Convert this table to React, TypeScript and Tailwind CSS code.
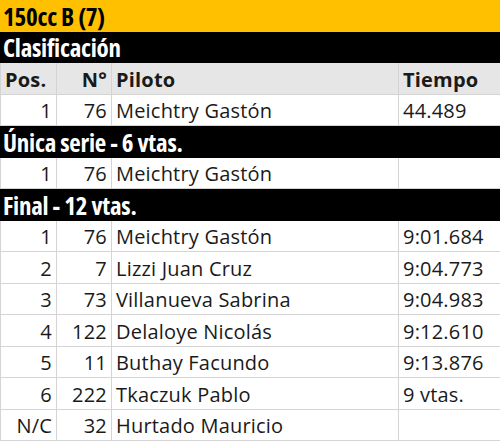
const rows: { pos: string; num: string; name: string; time: string }[] = [
  { pos: "1", num: "76", name: "Meichtry Gastón", time: "9:01.684" },
  { pos: "2", num: "7", name: "Lizzi Juan Cruz", time: "9:04.773" },
  { pos: "3", num: "73", name: "Villanueva Sabrina", time: "9:04.983" },
  { pos: "4", num: "122", name: "Delaloye Nicolás", time: "9:12.610" },
  { pos: "5", num: "11", name: "Buthay Facundo", time: "9:13.876" },
  { pos: "6", num: "222", name: "Tkaczuk Pablo", time: "9 vtas." },
  { pos: "N/C", num: "32", name: "Hurtado Mauricio", time: "" },
];

const titleFont = "font-['Open_Sans',sans-serif] font-stretch-condensed font-bold tracking-[-0.01em]";

function Band({ text, yellow }: { text: string; yellow?: boolean }) {
  return (
    <div
      className={`flex items-center px-[3px] pt-[1px] text-[25px] leading-none ${titleFont} ${
        yellow ? "bg-[#ffc000] text-black" : "bg-black text-white"
      }`}
    >
      {text}
    </div>
  );
}

function Row({ pos, num, name, time, head }: { pos: string; num: string; name: string; time: string; head?: boolean }) {
  const cell = "flex items-center pt-[3px] border-r border-[#d4d4d4] px-[4px] whitespace-nowrap";
  return (
    <div
      className={`grid grid-cols-[56px_55px_287px_102px] border-b border-[#d4d4d4] border-l text-[20px] tracking-[0.01em] leading-none ${
        head ? "bg-[#e7e6e6] font-bold text-[#1a1a1a]" : "bg-white text-[#1a1a1a]"
      }`}
    >
      <div className={`${cell} ${head ? "justify-start" : "justify-end"}`}>{pos}</div>
      <div className={`${cell} justify-end`}>{num}</div>
      <div className={cell}>{name}</div>
      <div className={cell}>{time}</div>
    </div>
  );
}

export default function App() {
  return (
    <div className="w-[500px] h-[441px] grid grid-rows-[repeat(14,1fr)] bg-white font-['Open_Sans',sans-serif] overflow-hidden">
      <Band text="150cc B (7)" yellow />
      <Band text="Clasificación" />
      <Row head pos="Pos." num="N°" name="Piloto" time="Tiempo" />
      <Row pos="1" num="76" name="Meichtry Gastón" time="44.489" />
      <Band text="Única serie - 6 vtas." />
      <Row pos="1" num="76" name="Meichtry Gastón" time="" />
      <Band text="Final - 12 vtas." />
      {rows.map((r) => (
        <Row key={r.pos} {...r} />
      ))}
    </div>
  );
}
